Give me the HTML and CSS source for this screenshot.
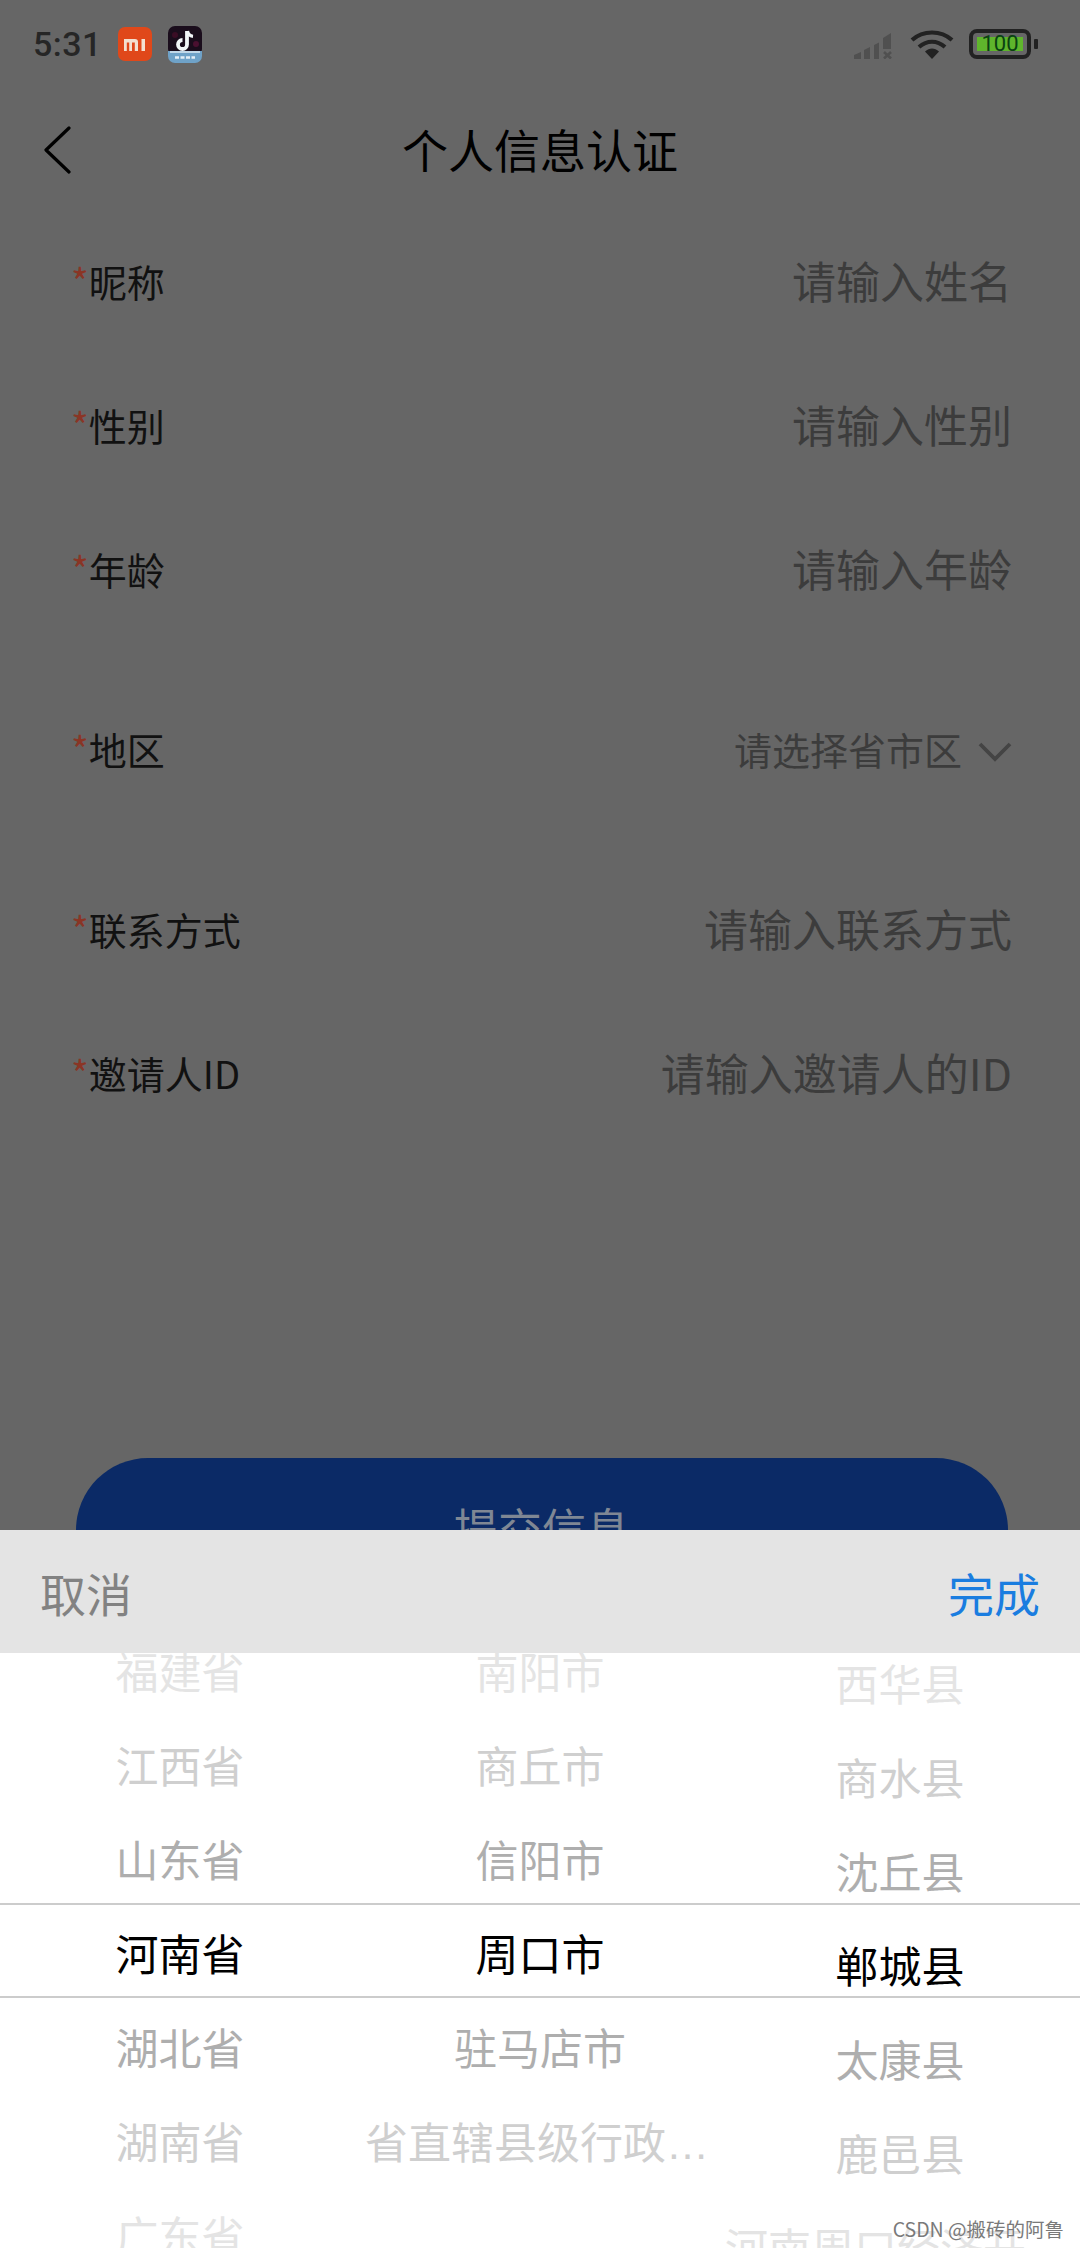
FILE: index.html
```html
<!DOCTYPE html>
<html lang="zh-CN">
<head>
<meta charset="utf-8">
<title>个人信息认证</title>
<link rel="stylesheet" href="styles.css">
</head>
<body>
<div class="page">
  <div class="status">
    <span class="time">5:31</span>
    <svg class="app-icon" viewBox="0 0 34 34"><rect width="34" height="34" rx="7" fill="#e0481a"/><path d="M6 12h11a3 3 0 0 1 3 3v9h-3.2v-8.6h-2.8V24h-2.8v-8.6H8.800V24H6zM23.500 12H27v12h-3.500z" fill="#f3e0d0"/></svg>
    <svg class="app-icon tiktok" viewBox="0 0 34 37"><rect width="34" height="30" rx="7" fill="#1a0d1c"/><path d="M0 25h34v5a7 7 0 0 1-7 7H7a7 7 0 0 1-7-7z" fill="#6fa2c8"/><path d="M2 26h30" stroke="#dbe9f3" stroke-width="1.500"/><path d="M7 31.500h20" stroke="#e4eef6" stroke-width="2.500" stroke-dasharray="4 1.500"/><circle cx="7" cy="9" r="3" fill="#3a0d25"/><circle cx="28" cy="18" r="3" fill="#4a1030"/><path d="M19 5v13.500a4.500 4.500 0 1 1-4.500-4.500" fill="none" stroke="#f2f6f8" stroke-width="3.800"/><path d="M19.500 5c.5 3 2.500 5 5.500 5.300" fill="none" stroke="#f2f6f8" stroke-width="3.200"/></svg>
    <div class="status-right">
      <svg class="signal" viewBox="0 0 42 30"><g fill="#505050"><path d="M1 30v-4l7-3v7zM11 30v-9l6-3v12zM21 30V16l5-2.500V30zM30 20V9l8-5v16z"/></g><path d="M31 23l7 6.500M38 23l-7 6.500" stroke="#505050" stroke-width="2.600"/></svg>
      <svg class="wifi" viewBox="0 0 44 30"><g fill="none" stroke="#222" stroke-width="4.200"><path d="M2 11C13 1 31 1 42 11"/><path d="M9 18c8-7 18-7 26 0"/></g><path d="M15 22.500c4.500-4 9.500-4 14 0L22 30z" fill="#222"/></svg>
      <div class="battery"><div class="battery-fill">100</div></div>
      <span class="battery-nub"></span>
    </div>
  </div>

  <div class="nav">
    <svg class="back" viewBox="0 0 30 48"><path d="M26 2L3 24l23 22" fill="none" stroke="#000" stroke-width="3.200" stroke-linecap="round" stroke-linejoin="round"/></svg>
    <h1 class="nav-title">个人信息认证</h1>
  </div>

  <div class="form">
    <div class="row"><span class="label"><i>*</i>昵称</span><span class="value">请输入姓名</span></div>
    <div class="row"><span class="label"><i>*</i>性别</span><span class="value">请输入性别</span></div>
    <div class="row"><span class="label"><i>*</i>年龄</span><span class="value">请输入年龄</span></div>
    <div class="row row-region"><span class="label"><i>*</i>地区</span><span class="value value-small">请选择省市区<svg class="chev" viewBox="0 0 34 20"><path d="M2 2l15 15L32 2" fill="none" stroke="#444" stroke-width="3.800"/></svg></span></div>
    <div class="row"><span class="label"><i>*</i>联系方式</span><span class="value">请输入联系方式</span></div>
    <div class="row"><span class="label"><i>*</i>邀请人ID</span><span class="value">请输入邀请人的ID</span></div>
  </div>

  <button class="submit">提交信息</button>

  <div class="sheet">
    <div class="sheet-head">
      <span class="cancel">取消</span>
      <span class="done">完成</span>
    </div>
    <div class="wheel">
      <div class="band"></div>
      <div class="col">
        <div class="item d3">福建省</div>
        <div class="item d2">江西省</div>
        <div class="item d1">山东省</div>
        <div class="item on">河南省</div>
        <div class="item d1">湖北省</div>
        <div class="item d2">湖南省</div>
        <div class="item d3">广东省</div>
      </div>
      <div class="col">
        <div class="item d3">南阳市</div>
        <div class="item d2">商丘市</div>
        <div class="item d1">信阳市</div>
        <div class="item on">周口市</div>
        <div class="item d1">驻马店市</div>
        <div class="item d2">省直辖县级行政区划</div>
      </div>
      <div class="col col-low">
        <div class="item d3">西华县</div>
        <div class="item d2">商水县</div>
        <div class="item d1">沈丘县</div>
        <div class="item on">郸城县</div>
        <div class="item d1">太康县</div>
        <div class="item d2">鹿邑县</div>
        <div class="item d3">河南周口经济开发区</div>
      </div>
    </div>
  </div>

  <span class="watermark">CSDN @搬砖的阿鲁</span>
</div>
</body>
</html>
```

FILE: styles.css
```css
* { box-sizing: border-box; }
html, body { margin: 0; padding: 0; }
body { font-family: "Noto Sans CJK SC", "Noto Sans", sans-serif; background: #666; }

.page {
  position: relative;
  width: 1080px;
  height: 2248px;
  overflow: hidden;
  background: #666;
}

.status {
  display: flex;
  align-items: center;
  height: 88px;
  padding: 0 42px 0 33px;
}
.time {
  font-family: Roboto, sans-serif;
  font-weight: 500;
  font-size: 34px;
  letter-spacing: 0.5px;
  color: #262626;
  margin-right: 16px;
}
.app-icon { width: 34px; height: 34px; margin-right: 16px; }
.tiktok { height: 37px; }
.status-right { margin-left: auto; display: flex; align-items: center; }
.signal { width: 42px; height: 30px; margin-right: 15px; }
.wifi { width: 44px; height: 30px; margin-right: 15px; }
.battery {
  width: 62px;
  height: 30px;
  padding: 4px;
  border: 4px solid #222;
  border-radius: 8px;
}
.battery-fill {
  display: flex;
  align-items: center;
  justify-content: center;
  height: 14px;
  background: #5fb52c;
  color: #0a4212;
  font-family: Roboto, sans-serif;
  font-size: 22px;
  line-height: 14px;
}
.battery-nub {
  width: 4px;
  height: 10px;
  margin-left: 3px;
  background: #222;
  border-radius: 1px;
}

.nav {
  position: relative;
  display: flex;
  align-items: center;
  justify-content: center;
  height: 124px;
  padding-bottom: 5px;
}
.back { position: absolute; left: 43px; top: 38px; width: 30px; height: 48px; }
.nav-title { margin: 0; font-size: 46px; font-weight: 400; color: #000; }

.form { display: flex; flex-direction: column; }
.row {
  display: flex;
  align-items: center;
  justify-content: space-between;
  height: 144px;
  padding: 0 68px 8px 71px;
}
.row-region { margin: 36px 0; }
.label { font-size: 38px; color: #111; }
.label i { font-style: normal; color: #8a3525; }
.value { font-size: 44px; color: #3c3c3c; }
.value-small { display: flex; align-items: center; gap: 16px; font-size: 38px; }
.chev { width: 34px; height: 20px; margin-top: 8px; }

.submit {
  display: block;
  width: 932px;
  height: 144px;
  margin: 310px 0 0 76px;
  padding: 0 0 7px;
  border: 0;
  border-radius: 72px;
  background: #0b2a66;
  color: #7f8794;
  font: inherit;
  font-size: 44px;
}

.sheet {
  position: absolute;
  left: 0;
  right: 0;
  bottom: 0;
  height: 718px;
  background: #fff;
}
.sheet-head {
  position: relative;
  z-index: 2;
  display: flex;
  align-items: center;
  justify-content: space-between;
  height: 123px;
  padding: 0 40px;
  background: #e4e4e4;
  font-size: 46px;
}
.cancel { color: #828282; }
.done { color: #1a7de0; }

.wheel {
  position: relative;
  display: flex;
  height: 595px;
  overflow: hidden;
}
.band {
  position: absolute;
  left: 0;
  right: 0;
  top: 250px;
  height: 95px;
  border-top: 2px solid #ccc;
  border-bottom: 2px solid #ccc;
}
.col { flex: 0 0 360px; width: 360px; margin-top: -27px; }
.col-low { margin-top: -15px; }
.item {
  height: 94px;
  padding: 0 5px;
  line-height: 96px;
  text-align: center;
  font-family: "Liberation Sans", "Noto Sans CJK SC", sans-serif;
  font-size: 43px;
  white-space: nowrap;
  overflow: hidden;
  text-overflow: ellipsis;
}
.on { color: #000; }
.d1 { color: #aeaeae; }
.d2 { color: #cfcfcf; }
.d3 { color: #e4e4e4; }

.watermark {
  position: absolute;
  right: 16px;
  bottom: 5px;
  font-size: 19.500px;
  color: #7a7a7a;
}
```
